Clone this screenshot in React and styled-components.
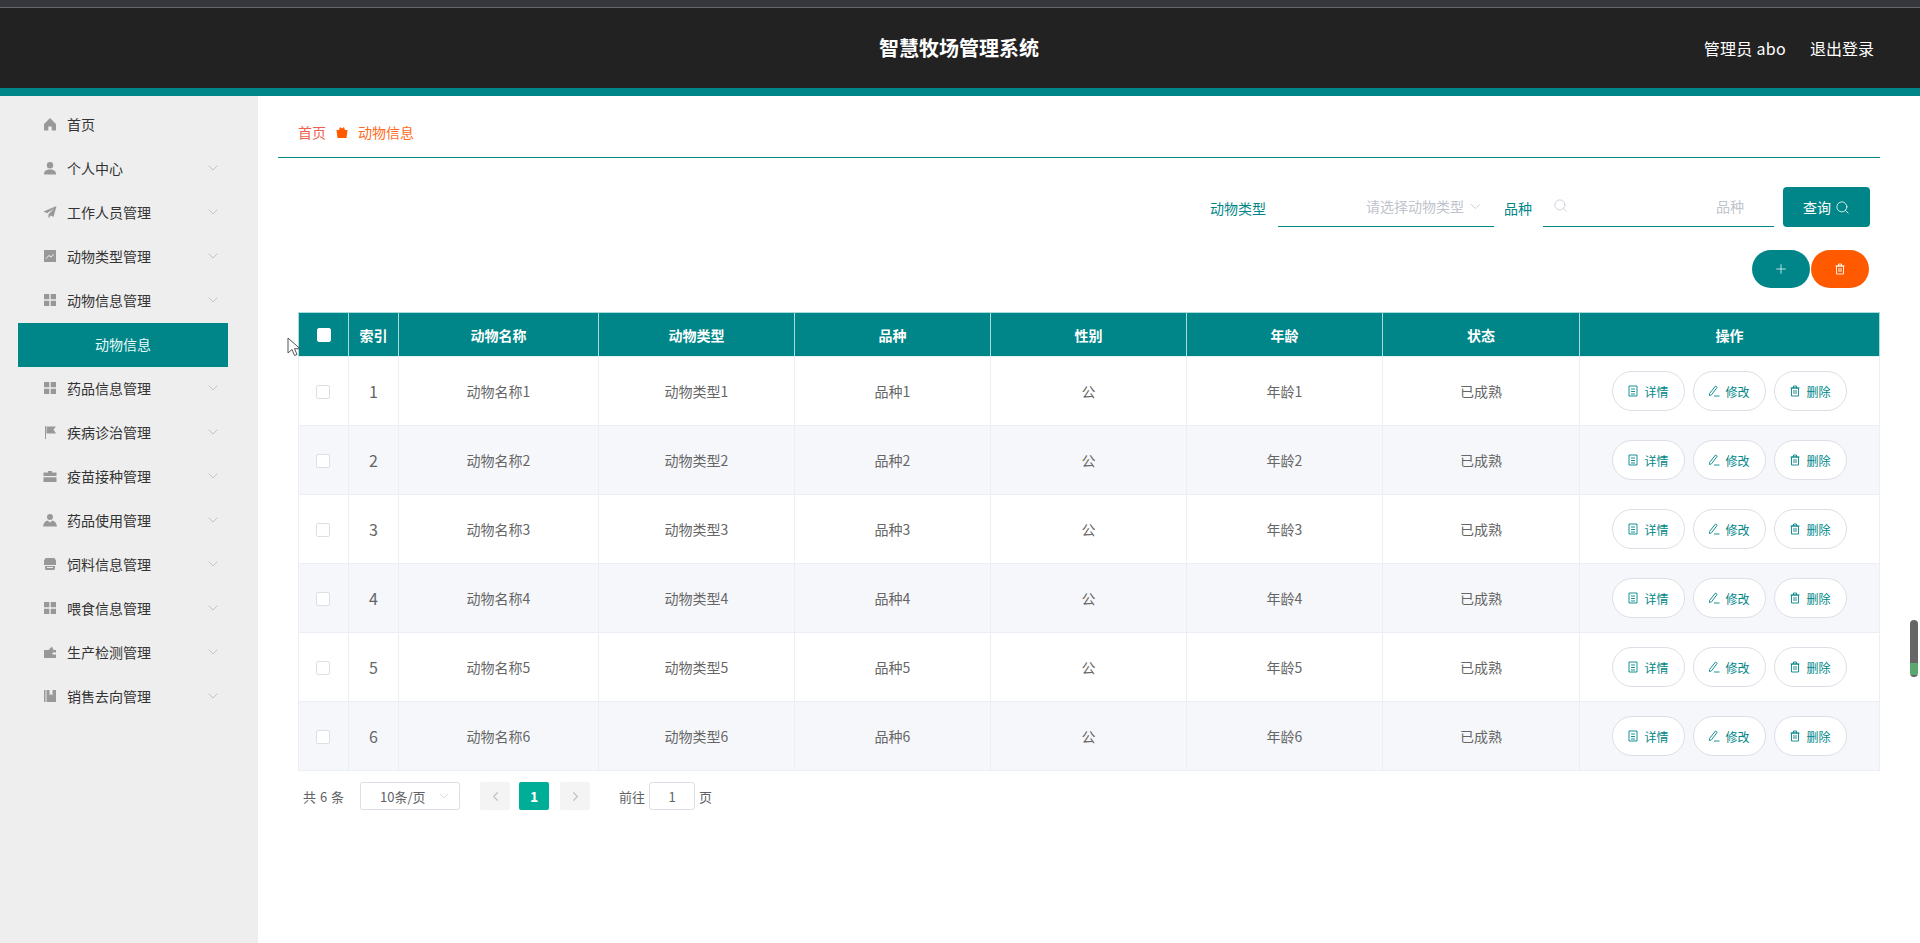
import React from "react";
import styled, { createGlobalStyle } from "styled-components";
import { FiChevronDown, FiChevronLeft, FiChevronRight, FiSearch } from "react-icons/fi";

const teal = "#008688";

const GlobalStyle = createGlobalStyle`
  html, body { margin: 0; padding: 0; background: #fff; }
  body { font-family: "Noto Sans CJK SC", "Noto Sans", sans-serif; height: 943px; overflow: hidden; }
  * { box-sizing: border-box; }
`;

const TopStrip = styled.div`
  height: 8px;
  background: #36373c;
  border-bottom: 1px solid #67676b;
`;
const Header = styled.header`
  height: 80px;
  background: #222;
  color: #fff;
  display: flex;
  align-items: center;
  position: relative;
  justify-content: flex-end;
  padding: 0 46px 1px 0;
  gap: 24px;
  font-size: 16px;
`;
const Title = styled.div`
  position: absolute;
  left: 0;
  right: 2px;
  text-align: center;
  font-size: 20px;
  font-weight: 700;
`;
const UserName = styled.span`
  letter-spacing: 0.3px;
`;
const Band = styled.div`
  height: 8px;
  background: ${teal};
`;
const Body = styled.div`
  display: flex;
  height: 847px;
`;
const Sidebar = styled.aside`
  width: 258px;
  background: #eee;
  padding: 7px 30px 0 18px;
  flex: none;
`;
const MenuRow = styled.div`
  height: 44px;
  display: flex;
  align-items: center;
  padding: 0 0 2px 25px;
  font-size: 14px;
  color: #333;
  svg.ic { width: 14px; height: 14px; margin-right: 10px; flex: none; }
`;
const Chevron = styled(FiChevronDown)`
  margin-left: auto;
  margin-right: 7px;
  color: #b0b0b0;
  width: 16px;
  height: 16px;
  stroke-width: 1.1;
`;
const SubRow = styled.div`
  height: 44px;
  background: ${teal};
  color: #e6fbfb;
  font-size: 14px;
  display: flex;
  align-items: center;
  justify-content: center;
  padding-bottom: 2px;
`;
const Main = styled.main`
  flex: 1;
  padding: 0 40px 0 20px;
`;
const Crumbs = styled.div`
  height: 62px;
  border-bottom: 1px solid ${teal};
  display: flex;
  align-items: center;
  padding: 11px 0 0 20px;
  font-size: 14px;
`;
const CrumbHome = styled.span`
  color: #ee5f4c;
`;
const CrumbSep = styled.svg`
  width: 14px;
  height: 14px;
  margin: 0 9px 0 9px;
`;
const CrumbNow = styled.span`
  color: #ff6a1e;
`;
const Filters = styled.div`
  display: flex;
  justify-content: flex-end;
  align-items: flex-end;
  margin-top: 29px;
  padding-right: 10px;
  height: 40px;
`;
const FilterLabel = styled.label`
  color: ${teal};
  font-size: 14px;
  line-height: 38px;
  margin-right: ${(p) => p.$gap}px;
`;
const UnderlineField = styled.div`
  width: ${(p) => p.$w}px;
  height: 40px;
  border-bottom: 1px solid ${teal};
  display: flex;
  align-items: center;
  justify-content: flex-end;
  color: #c0c4cc;
  font-size: 14px;
  padding: 0 ${(p) => p.$pr}px 2px 10px;
  margin-right: ${(p) => p.$mr}px;
`;
const FieldIcon = styled(FiSearch)`
  margin-right: auto;
  width: 15px;
  height: 15px;
  stroke-width: 1.2;
`;
const ArrowIcon = styled(FiChevronDown)`
  margin: 2px 0 0 3px;
  width: 17px;
  height: 17px;
  stroke-width: 1.1;
`;
const QueryButton = styled.button`
  width: 87px;
  height: 40px;
  border: 0;
  border-radius: 4px;
  background: ${teal};
  color: #fff;
  font: inherit;
  font-size: 14px;
  display: flex;
  align-items: center;
  justify-content: center;
  gap: 4px;
  svg { width: 15px; height: 15px; stroke-width: 1.3; }
`;
const Actions = styled.div`
  display: flex;
  justify-content: flex-end;
  gap: 1px;
  margin-top: 23px;
  padding-right: 11px;
`;
const RoundButton = styled.button`
  width: 58px;
  height: 38px;
  border: 0;
  border-radius: 19px;
  background: ${(p) => p.$bg};
  color: #fff;
  display: flex;
  align-items: center;
  justify-content: center;
  padding: 0;
`;
const TableWrap = styled.div`
  margin: 24px 0 0 20px;
`;
const Table = styled.table`
  width: 1581px;
  table-layout: fixed;
  border-collapse: collapse;
  font-size: 14px;
  color: #666;
`;
const Th = styled.th`
  height: 44px;
  padding: 0;
  background: ${teal};
  color: #fff;
  font-size: 14px;
  font-weight: 700;
  text-align: center;
  border: 1px solid #a9dcdc;
  border-bottom: 1px solid #dff3f3;
`;
const Tr = styled.tr`
  background: ${(p) => (p.$alt ? "#f5f7fa" : "#fff")};
`;
const Td = styled.td`
  height: 69px;
  padding: 0;
  text-align: center;
  border: 1px solid #ebeef5;
`;
const IndexCell = styled(Td)`
  font-size: 16px;
`;
const Check = styled.span`
  display: block;
  width: 14px;
  height: 14px;
  border-radius: 2px;
  margin: ${(p) => (p.$head ? "0" : "1px")} auto 0;
  position: relative;
  left: ${(p) => (p.$head ? 0 : -1)}px;
  background: #fff;
  border: 1px solid ${(p) => (p.$head ? "#fff" : "#dcdfe6")};
`;
const OpCell = styled.div`
  display: flex;
  justify-content: center;
  gap: 8px;
  padding-right: 1px;
`;
const OpButton = styled.button`
  width: 73px;
  height: 40px;
  border: 1px solid #dcdfe6;
  border-radius: 20px;
  background: #fff;
  color: ${teal};
  font: inherit;
  font-size: 12px;
  padding: 0;
  display: flex;
  align-items: center;
  justify-content: center;
  gap: 5px;
  svg { width: 12px; height: 12px; }
`;
const Pager = styled.div`
  display: flex;
  align-items: center;
  margin-top: 11px;
  padding-left: 5px;
  font-size: 13px;
  color: #606266;
`;
const Total = styled.span`
  word-spacing: 1px;
`;
const PageSize = styled.div`
  width: 100px;
  height: 28px;
  margin-left: 16px;
  border: 1px solid #dcdfe6;
  border-radius: 3px;
  display: flex;
  align-items: center;
  padding-left: 19px;
  svg { margin-left: auto; margin-right: 8px; width: 14px; height: 14px; color: #c0c4cc; stroke-width: 1.2; }
`;
const PageBtn = styled.div`
  width: 30px;
  height: 28px;
  border-radius: 2px;
  margin-left: ${(p) => p.$ml}px;
  background: ${(p) => (p.$on ? "#00ad96" : "#f4f4f5")};
  color: ${(p) => (p.$on ? "#fff" : "#c0c4cc")};
  font-weight: 700;
  font-size: 14px;
  display: flex;
  align-items: center;
  justify-content: center;
  svg { width: 15px; height: 15px; }
`;
const JumpLabel = styled.span`
  margin-left: ${(p) => p.$ml}px;
`;
const JumpBox = styled.div`
  width: 46px;
  height: 28px;
  margin: 0 4px;
  border: 1px solid #dcdfe6;
  border-radius: 3px;
  display: flex;
  align-items: center;
  justify-content: center;
`;
const ScrollThumb = styled.div`
  position: absolute;
  left: 1910px;
  top: 620px;
  width: 8px;
  height: 57px;
  border-radius: 4px;
  background: linear-gradient(#666 0 75%, #5aa86e 75% 97%, #666 97%);
`;
const Cursor = styled.svg`
  position: absolute;
  left: 287px;
  top: 337px;
  width: 14px;
  height: 20px;
`;

const g = { fill: "#9a979b" };
const icons = {
  home: <path {...g} d="M7 1 1 7v6.5h4.3V9.5h3.4v4H13V7z" />,
  user: <path {...g} d="M7 1a3 3 0 1 1 0 6.4A3 3 0 0 1 7 1zM1 13.5c0-3.6 2-5 6-5s6 1.4 6 5z" />,
  plane: <path {...g} d="M13.500 1 .500 6.500l3.500 1.800L11 3.500 5.500 9.200v4l2.400-2.700 2.600 1.500z" />,
  chart: <path {...g} fillRule="evenodd" d="M1 1h12v12H1zM3 10l3-3 2 1.500 3-3-.5-.5L8 7.300 6 6 2.500 9.500z" />,
  grid: <path {...g} d="M1 1h5.300v5.300H1zM7.700 1H13v5.300H7.700zM1 7.700h5.300V13H1zM7.700 7.700H13V13H7.700z" />,
  flag: <path {...g} d="M2 1h1v13H2zM3.500 1.500H13L10.500 4.500 13 8.500H3.500z" />,
  case: <path {...g} d="M5 2h4v1.500h4.500V7H.5V3.500H5zM.5 8.200h13V13H.5z" />,
  person: <path {...g} d="M7 1a3 3 0 1 1 0 6 3 3 0 0 1 0-6zM4.500 7.500 7 9.500l2.500-2c2.500.5 4 2.500 4.500 6H0c.5-3.500 2-5.500 4.500-6z" />,
  shop: <path {...g} d="M2.500 1h9L13 3.500V8H1V3.500zM2 9h10v2.500A1.500 1.500 0 0 1 10.500 13h-7A1.500 1.500 0 0 1 2 11.500zm2 1v1h6v-1z" />,
  wallet: <path {...g} d="M1 5h4.500L9 1.500 10.500 5H13v2.500H9.500v2H13V13H1z" />,
  book: <path {...g} d="M1 1h1.500v12H1zM3.500 1h3v5.500L8 5l1.500 1.500V1H13v12H3.500z" />,
};

const menu = [
  ["首页", "home", false],
  ["个人中心", "user", true],
  ["工作人员管理", "plane", true],
  ["动物类型管理", "chart", true],
  ["动物信息管理", "grid", true, "动物信息"],
  ["药品信息管理", "grid", true],
  ["疾病诊治管理", "flag", true],
  ["疫苗接种管理", "case", true],
  ["药品使用管理", "person", true],
  ["饲料信息管理", "shop", true],
  ["喂食信息管理", "grid", true],
  ["生产检测管理", "wallet", true],
  ["销售去向管理", "book", true],
];

const columns = [50, 50, 200, 196, 196, 196, 196, 197, 300];
const heads = ["索引", "动物名称", "动物类型", "品种", "性别", "年龄", "状态", "操作"];
const rows = [1, 2, 3, 4, 5, 6];

const DetailIcon = () => (
  <svg viewBox="0 0 12 12" fill="none" stroke="currentColor" strokeWidth="0.9">
    <path d="M2 1h8v10H2zM4 4h4M4 6.500h4M4 9h4" />
  </svg>
);
const EditIcon = () => (
  <svg viewBox="0 0 12 12" fill="none" stroke="currentColor" strokeWidth="0.9">
    <path d="M1.500 8.500 7.500 1l1.700 1.300L3.500 9.800l-2 .7zM6 11h5.500" />
  </svg>
);
const TrashIcon = ({ size = 12 }) => (
  <svg viewBox="0 0 12 12" width={size} height={size} fill="none" stroke="currentColor" strokeWidth="0.9">
    <path d="M2.500 3h7v8h-7zM1.500 3h9M4.500 3V1h3v2M5 5v4M7 5v4" />
  </svg>
);

export default function App() {
  return (
    <>
      <GlobalStyle />
      <TopStrip />
      <Header>
        <Title>智慧牧场管理系统</Title>
        <UserName>管理员 abo</UserName>
        <span>退出登录</span>
      </Header>
      <Band />
      <Body>
        <Sidebar>
          {menu.map(([name, icon, arrow, sub]) => (
            <React.Fragment key={name}>
              <MenuRow>
                <svg className="ic" viewBox="0 0 14 14">{icons[icon]}</svg>
                {name}
                {arrow && <Chevron />}
              </MenuRow>
              {sub && <SubRow>{sub}</SubRow>}
            </React.Fragment>
          ))}
        </Sidebar>
        <Main>
          <Crumbs>
            <CrumbHome>首页</CrumbHome>
            <CrumbSep viewBox="0 0 14 14">
              <path fill="#ff5a00" d="M1.500 5H4l1-3 2 1.500L9 2l1 3h2.500L11.500 13h-9z" />
            </CrumbSep>
            <CrumbNow>动物信息</CrumbNow>
          </Crumbs>
          <Filters>
            <FilterLabel $gap={12}>动物类型</FilterLabel>
            <UnderlineField $w={216} $pr={10} $mr={10}>
              请选择动物类型
              <ArrowIcon />
            </UnderlineField>
            <FilterLabel $gap={11}>品种</FilterLabel>
            <UnderlineField $w={231} $pr={30} $mr={9}>
              <FieldIcon />
              品种
            </UnderlineField>
            <QueryButton>
              查询 <FiSearch />
            </QueryButton>
          </Filters>
          <Actions>
            <RoundButton $bg={teal}>
              <svg width="12" height="12" viewBox="0 0 14 14" stroke="#d8f3f3" strokeWidth="1">
                <path d="M7 1.500v11M1.500 7h11" />
              </svg>
            </RoundButton>
            <RoundButton $bg="#ff5a00">
              <TrashIcon />
            </RoundButton>
          </Actions>
          <TableWrap>
            <Table>
              <colgroup>
                {columns.map((w, i) => (
                  <col key={i} width={w} />
                ))}
              </colgroup>
              <thead>
                <tr>
                  <Th><Check $head /></Th>
                  {heads.map((h) => (
                    <Th key={h}>{h}</Th>
                  ))}
                </tr>
              </thead>
              <tbody>
                {rows.map((n) => (
                  <Tr key={n} $alt={n % 2 === 0}>
                    <Td><Check /></Td>
                    <IndexCell>{n}</IndexCell>
                    <Td>动物名称{n}</Td>
                    <Td>动物类型{n}</Td>
                    <Td>品种{n}</Td>
                    <Td>公</Td>
                    <Td>年龄{n}</Td>
                    <Td>已成熟</Td>
                    <Td>
                      <OpCell>
                        <OpButton><DetailIcon />详情</OpButton>
                        <OpButton><EditIcon />修改</OpButton>
                        <OpButton><TrashIcon />删除</OpButton>
                      </OpCell>
                    </Td>
                  </Tr>
                ))}
              </tbody>
            </Table>
            <Pager>
              <Total>共 6 条</Total>
              <PageSize>10条/页<FiChevronDown /></PageSize>
              <PageBtn $ml={20}><FiChevronLeft /></PageBtn>
              <PageBtn $ml={9} $on>1</PageBtn>
              <PageBtn $ml={11}><FiChevronRight /></PageBtn>
              <JumpLabel $ml={29}>前往</JumpLabel>
              <JumpBox>1</JumpBox>
              <span>页</span>
            </Pager>
          </TableWrap>
        </Main>
      </Body>
      <ScrollThumb />
      <Cursor viewBox="0 0 14 20">
        <path fill="#fff" stroke="#555" strokeWidth="1" d="M1 1v15l4-3.500 2.500 6 2.500-1-2.500-5.800H13z" />
      </Cursor>
    </>
  );
}
